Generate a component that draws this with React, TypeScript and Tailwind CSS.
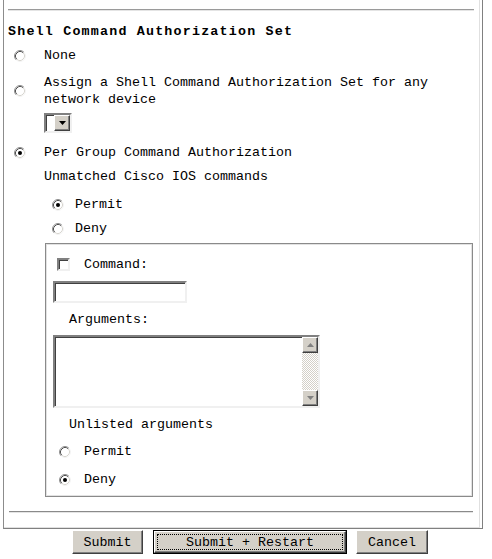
import type { FC } from 'react';

const Radio: FC<{ checked?: boolean }> = ({ checked }) => (
  <svg width="12" height="12" viewBox="0 0 12 12" className="shrink-0">
    <circle cx="6" cy="6" r="5" fill="#fff" />
    <path d="M2.11 9.89A5.5 5.5 0 0 1 9.89 2.11" stroke="#909090" fill="none" />
    <path d="M9.89 2.11A5.5 5.5 0 0 1 2.11 9.89" stroke="#f4f4f4" fill="none" />
    <path d="M2.82 9.18A4.5 4.5 0 0 1 9.18 2.82" stroke="#505050" fill="none" />
    <path d="M9.18 2.82A4.5 4.5 0 0 1 2.82 9.18" stroke="#d8d6d0" fill="none" />
    {checked && <circle cx="6" cy="6" r="2" fill="#000" />}
  </svg>
);

const Arrow: FC<{ up?: boolean; color?: string }> = ({ up, color = '#000' }) => (
  <svg width="7" height="4" viewBox="0 0 7 4">
    <path d={up ? 'M3.5 0L7 4H0Z' : 'M0 0H7L3.5 4Z'} fill={color} />
  </svg>
);

const ScrollBtn: FC<{ up?: boolean; color?: string }> = ({ up, color }) => (
  <div className="w-[16px] h-[16px] shrink-0 flex items-center justify-center bg-[#d4d0c8] border border-t-white border-l-white border-r-[#404040] border-b-[#404040] shadow-[inset_-1px_-1px_#808080]">
    <Arrow up={up} color={color} />
  </div>
);

const sunken =
  'border-2 border-t-[#808080] border-l-[#808080] border-r-[#f0f0f0] border-b-[#f0f0f0] shadow-[inset_1px_1px_#404040]';

const btn =
  'h-[24px] flex items-center justify-center bg-[#d4d0c8] border border-t-white border-l-white border-r-[#404040] border-b-[#404040] shadow-[inset_-1px_-1px_#808080]';

export default function App() {
  return (
    <div className="w-[492px] h-[559px] bg-white text-black text-[13.33px] leading-[17px] font-['Liberation_Mono',monospace]">
      <div className="ml-[3px] w-[480px] h-[529px] border-l border-l-[#8c8c8c] border-r border-r-[#808080] border-b border-b-[#808080]">
        <div className="h-[528px] mr-[2px] border-r border-r-[#e0e0e0] border-b border-b-[#e0e0e0] flex flex-col">
          <div className="h-[9px]" />
          <div className="ml-[4px] w-[466px] h-[2px] border-t border-t-[#9a9a9a] border-b border-b-[#e4e4e4]" />
          <div className="h-[12px]" />
          <div className="pl-[4px] h-[17px] font-bold tracking-[1.2px]">Shell Command Authorization Set</div>
          <div className="h-[7px]" />
          <div className="h-[17px] flex items-center pl-[10px] gap-[18px]">
            <Radio />
            <span>None</span>
          </div>
          <div className="h-[10px]" />
          <div className="flex items-center pl-[10px] gap-[18px]">
            <Radio />
            <div>
              <div className="h-[17px]">Assign a Shell Command Authorization Set for any</div>
              <div className="h-[17px]">network device</div>
            </div>
          </div>
          <div className="h-[5px]" />
          <div className={`ml-[40px] w-[28px] h-[20px] bg-white flex justify-end items-center ${sunken}`}>
            <ScrollBtn />
          </div>
          <div className="h-[11px]" />
          <div className="h-[17px] flex items-center pl-[10px] gap-[18px]">
            <Radio checked />
            <span>Per Group Command Authorization</span>
          </div>
          <div className="h-[7px]" />
          <div className="h-[17px] pl-[40px]">Unmatched Cisco IOS commands</div>
          <div className="h-[11px]" />
          <div className="h-[17px] flex items-center pl-[48px] gap-[11px]">
            <Radio checked />
            <span>Permit</span>
          </div>
          <div className="h-[7px]" />
          <div className="h-[17px] flex items-center pl-[48px] gap-[11px]">
            <Radio />
            <span>Deny</span>
          </div>
          <div className="h-[6px]" />
          <div className="ml-[41px] w-[428px] h-[254px] border border-[#8a8a8a]">
            <div className="h-full border border-[#e2e2e2] flex flex-col">
              <div className="h-[13px]" />
              <div className="h-[13px] flex items-center pl-[10px] gap-[14px]">
                <div className={`w-[13px] h-[13px] bg-white ${sunken}`} />
                <span>Command:</span>
              </div>
              <div className="h-[10px]" />
              <div className={`ml-[6px] w-[134px] h-[22px] bg-white ${sunken}`} />
              <div className="h-[8px]" />
              <div className="h-[17px] pl-[22px]">Arguments:</div>
              <div className="h-[7px]" />
              <div className={`ml-[6px] w-[267px] h-[73px] bg-white flex ${sunken}`}>
                <div className="flex-1" />
                <div className="w-[16px] flex flex-col">
                  <ScrollBtn up color="#808080" />
                  <div className="flex-1 bg-[repeating-conic-gradient(#d4d0c8_0_25%,#ffffff_0_50%)] bg-[length:2px_2px]" />
                  <ScrollBtn color="#808080" />
                </div>
              </div>
              <div className="h-[8px]" />
              <div className="h-[17px] pl-[22px]">Unlisted arguments</div>
              <div className="h-[10px]" />
              <div className="h-[17px] flex items-center pl-[12px] gap-[13px]">
                <Radio />
                <span>Permit</span>
              </div>
              <div className="h-[11px]" />
              <div className="h-[17px] flex items-center pl-[12px] gap-[13px]">
                <Radio checked />
                <span>Deny</span>
              </div>
            </div>
          </div>
          <div className="h-[14px]" />
          <div className="ml-[5px] w-[464px] h-[2px] border-t border-t-[#8a8a8a] border-b border-b-[#e4e4e4]" />
        </div>
      </div>
      <div className="mt-[1px] ml-[72px] flex">
        <div className={`w-[71px] ${btn}`}>Submit</div>
        <div className="ml-[10px] w-[194px] h-[24px] border border-black">
          <div className="h-full flex items-center justify-center bg-[#d4d0c8] border border-t-white border-l-white border-r-[#404040] border-b-[#404040] shadow-[inset_-1px_-1px_#808080] p-[2px]">
            <div className="w-full h-full flex items-center justify-center border border-dotted border-black">
              Submit + Restart
            </div>
          </div>
        </div>
        <div className={`ml-[9px] w-[72px] ${btn}`}>Cancel</div>
      </div>
    </div>
  );
}
